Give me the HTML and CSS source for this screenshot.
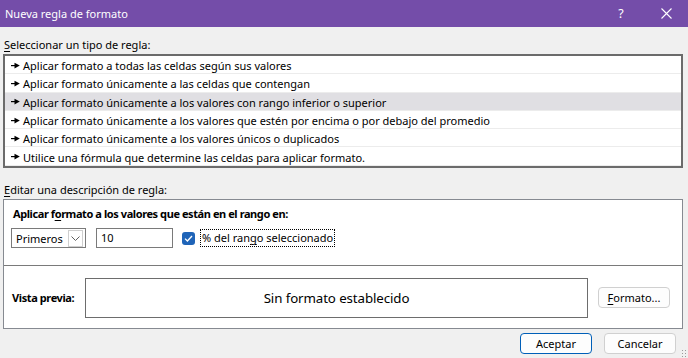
FILE: index.html
```html
<!DOCTYPE html>
<html lang="es">
<head>
<meta charset="utf-8">
<title>Nueva regla de formato</title>
<link rel="stylesheet" href="styles.css">
</head>
<body>
<div class="dialog">
  <header class="titlebar">
    <span class="title">Nueva regla de formato</span>
    <span class="tb-btn help">?</span>
    <span class="tb-btn close">
      <svg width="11" height="11" viewBox="0 0 11 11"><path d="M0.5 0.5L10.5 10.5M10.5 0.5L0.5 10.5" stroke="#fff" stroke-width="1.1" fill="none"/></svg>
    </span>
  </header>
  <main class="content">
    <div class="section-label first"><u>S</u>eleccionar un tipo de regla:</div>
    <ul class="rulelist">
      <li class="rule"><svg class="arrow" width="9" height="7" viewBox="0 0 9 7"><path d="M0 3h4v1.2H0z" fill="#000"/><path d="M3.5 0.8L8.8 3.6L3.5 6.4Z" fill="#000"/></svg>Aplicar formato a todas las celdas según sus valores</li>
      <li class="rule"><svg class="arrow" width="9" height="7" viewBox="0 0 9 7"><path d="M0 3h4v1.2H0z" fill="#000"/><path d="M3.5 0.8L8.8 3.6L3.5 6.4Z" fill="#000"/></svg>Aplicar formato únicamente a las celdas que contengan</li>
      <li class="rule selected"><svg class="arrow" width="9" height="7" viewBox="0 0 9 7"><path d="M0 3h4v1.2H0z" fill="#000"/><path d="M3.5 0.8L8.8 3.6L3.5 6.4Z" fill="#000"/></svg>Aplicar formato únicamente a los valores con rango inferior o superior</li>
      <li class="rule"><svg class="arrow" width="9" height="7" viewBox="0 0 9 7"><path d="M0 3h4v1.2H0z" fill="#000"/><path d="M3.5 0.8L8.8 3.6L3.5 6.4Z" fill="#000"/></svg>Aplicar formato únicamente a los valores que estén por encima o por debajo del promedio</li>
      <li class="rule"><svg class="arrow" width="9" height="7" viewBox="0 0 9 7"><path d="M0 3h4v1.2H0z" fill="#000"/><path d="M3.5 0.8L8.8 3.6L3.5 6.4Z" fill="#000"/></svg>Aplicar formato únicamente a los valores únicos o duplicados</li>
      <li class="rule"><svg class="arrow" width="9" height="7" viewBox="0 0 9 7"><path d="M0 3h4v1.2H0z" fill="#000"/><path d="M3.5 0.8L8.8 3.6L3.5 6.4Z" fill="#000"/></svg>Utilice una fórmula que determine las celdas para aplicar formato.</li>
    </ul>
    <div class="section-label second"><u>E</u>ditar una descripción de regla:</div>
    <section class="desc">
      <div class="desc-top">
        <div class="desc-title">Aplicar f<u>o</u>rmato a los valores que están en el rango en:</div>
        <div class="controls">
          <div class="combo">
            <span class="combo-text">Primeros</span>
            <span class="combo-btn"><svg width="9" height="5" viewBox="0 0 9 5"><path d="M0.5 0.5L4.5 4.5L8.5 0.5" stroke="#606060" stroke-width="1" fill="none"/></svg></span>
          </div>
          <div class="textbox">10</div>
          <span class="checkbox"><svg width="9" height="7" viewBox="0 0 9 7"><path d="M1 3.6L3.4 6L8 1" stroke="#fff" stroke-width="1.3" fill="none"/></svg></span>
          <span class="check-label">% del ran<u>g</u>o seleccionado</span>
        </div>
      </div>
      <div class="desc-bottom">
        <span class="preview-label">Vista previa:</span>
        <div class="preview">Sin formato establecido</div>
        <button class="btn format-btn"><u>F</u>ormato...</button>
      </div>
    </section>
    <div class="actions">
      <button class="btn default">Aceptar</button>
      <button class="btn">Cancelar</button>
    </div>
  </main>
  <span class="grip"></span>
</div>
</body>
</html>
```
FILE: styles.css
```css
* { box-sizing: border-box; margin: 0; padding: 0; }
html, body { width: 688px; height: 358px; overflow: hidden; }
body {
  background: #f0f0f0;
  font-family: "Noto Sans", "Open Sans", sans-serif;
  font-size: 11px;
  color: #000;
}
u { text-decoration: underline; text-underline-offset: 2px; }
.dialog { position: relative; width: 688px; height: 358px; display: flex; flex-direction: column; }

.titlebar {
  height: 27px;
  background: #744da9;
  color: #fff;
  display: flex;
  align-items: center;
  padding-left: 5px;
}
.title { flex: 1; font-size: 11px; }
.tb-btn { display: flex; align-items: center; justify-content: center; height: 27px; }
.help { width: 46px; font-size: 12.5px; }
.close { width: 44px; }

.content { display: flex; flex-direction: column; padding: 0 5px 0 3px; }
.section-label { line-height: 16px; padding-left: 1px; }
.section-label.first { padding-top: 10px; height: 27px; }
.section-label.second { padding-top: 14px; height: 31px; }

.rulelist {
  list-style: none;
  height: 114px;
  border: 2px solid #6b6b6b;
  background: #fff;
}
.rule {
  height: 18.3px;
  display: flex;
  align-items: center;
  padding: 2px 0 0 6px;
  border-bottom: 1px solid #ececec;
  white-space: nowrap;
}
.rule.selected { background: #e0dfe3; }
.arrow { margin-right: 3px; flex: none; margin-top: -1px; }

.desc {
  height: 130px;
  border: 1px solid #868a91;
  background: #fff;
  display: flex;
  flex-direction: column;
}
.desc-top { height: 66px; border-bottom: 1px solid #7a7a7a; padding: 6px 0 0 7px; }
.desc-title { font-weight: bold; letter-spacing: -0.42px; line-height: 16px; padding-left: 2px; }
.controls { display: flex; align-items: center; margin-top: 6px; height: 20px; }
.combo {
  width: 75px; height: 20px;
  border: 1px solid #7a7a7a;
  display: flex; align-items: center;
  padding-left: 4px;
}
.combo-text { flex: 1; }
.combo-btn {
  width: 15px; height: 17px;
  margin-right: 2px;
  border: 1px solid #cfcfcf;
  display: flex; align-items: center; justify-content: center;
}
.textbox {
  width: 77px; height: 20px;
  margin-left: 10px;
  border: 1px solid #7a7a7a;
  padding-left: 4px;
  line-height: 18px;
}
.checkbox {
  width: 13px; height: 13px;
  margin-left: 9px;
  border-radius: 3px;
  background: #1f64b8;
  display: flex; align-items: center; justify-content: center;
}
.check-label {
  margin-left: 5px;
  height: 18px;
  line-height: 16px;
  padding: 0 1px 0 1px;
  border: 1px dotted #000;
}

.desc-bottom {
  flex: 1;
  display: flex;
  align-items: center;
  padding: 0 11px 0 8px;
}
.preview-label { font-weight: bold; letter-spacing: -0.4px; width: 73px; white-space: nowrap; }
.preview {
  width: 503px; height: 40px;
  border: 1px solid #6d6d6d;
  display: flex; align-items: center; justify-content: center;
  font-size: 13.3px;
  letter-spacing: -0.1px;
  margin-top: 2px;
}
.btn {
  font-family: inherit;
  font-size: 11px;
  color: #000;
  background: #fdfdfd;
  border: 1px solid #d0d0d0;
  border-radius: 4px;
  height: 21px;
  width: 72px;
}
.format-btn { margin-left: 10px; }

.actions { display: flex; justify-content: flex-end; gap: 12px; padding: 4px 7px 0 0; }
.btn.default { border-color: #005fb8; }

.grip {
  position: absolute; right: 1px; bottom: 1px;
  width: 6px; height: 8px;
  background-image: radial-gradient(circle, #9a9a9a 0.8px, transparent 1px);
  background-size: 3px 3px;
}
```
